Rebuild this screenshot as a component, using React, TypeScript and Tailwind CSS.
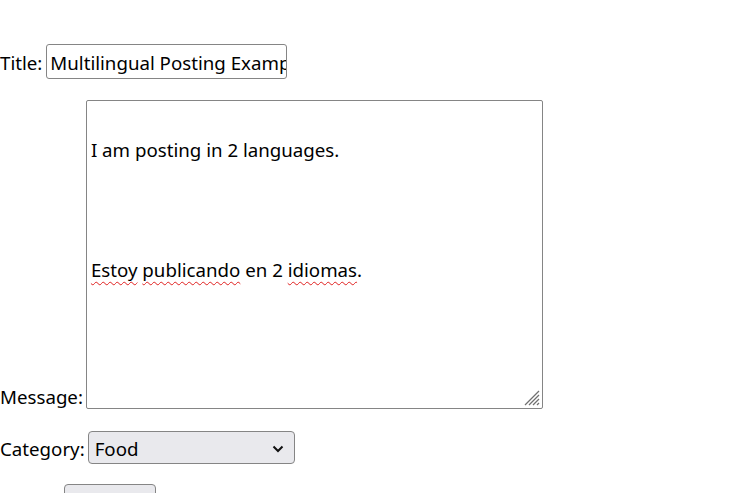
import React from "react";

const font = { fontFamily: '"Noto Sans", "Open Sans", sans-serif' };

function Squiggle({ children }: { children: React.ReactNode }) {
  return (
    <span className="underline decoration-wavy decoration-[#e0201f] decoration-1 underline-offset-[4px]">
      {children}
    </span>
  );
}

export default function App() {
  return (
    <div className="bg-white w-[756px] h-[493px] overflow-hidden text-black text-[18.7px] leading-[30px]" style={font}>
      <div className="pt-[44px]">
        <div className="flex items-center h-[35px]">
          <span className="mt-[2px]">Title:</span>
          <div className="ml-[4px] w-[241px] h-[35px] border border-[#858585] rounded-[3px] pl-[3px] pr-[3px] pt-[2px] overflow-hidden whitespace-nowrap flex items-center">
            <span>Multilingual Posting Example</span>
          </div>
        </div>

        <div className="flex items-end mt-[21px]">
          <span className="mb-[-3px]">Message:</span>
          <div className="relative ml-[3px] w-[457px] h-[309px] border border-[#858585] rounded-[2px] pl-[4px] pt-[4px]">
            <div>&nbsp;</div>
            <div>I am posting in 2 languages.</div>
            <div>&nbsp;</div>
            <div>&nbsp;</div>
            <div>&nbsp;</div>
            <div>
              <Squiggle>Estoy</Squiggle> <Squiggle>publicando</Squiggle> en 2 <Squiggle>idiomas</Squiggle>.
            </div>
            <svg className="absolute right-[2px] bottom-[2px]" width="18" height="18" viewBox="0 0 18 18">
              <line x1="17" y1="3" x2="3" y2="17" stroke="#707070" strokeWidth="1.3" />
              <line x1="17" y1="7" x2="7" y2="17" stroke="#707070" strokeWidth="1.3" />
              <line x1="17" y1="11" x2="11" y2="17" stroke="#707070" strokeWidth="1.3" />
              <line x1="17" y1="15" x2="15" y2="17" stroke="#707070" strokeWidth="1.3" />
            </svg>
          </div>
        </div>

        <div className="flex items-center mt-[22px]">
          <span className="mt-[2px]">Category:</span>
          <div className="ml-[3px] w-[207px] h-[33px] bg-[#e9e9ed] border border-[#858585] rounded-[4px] pl-[6px] pr-[10px] pt-[2px] flex items-center justify-between">
            <span>Food</span>
            <svg width="12" height="8" viewBox="0 0 12 8">
              <path d="M1.5 1.5 L6 6 L10.5 1.5" fill="none" stroke="#111" strokeWidth="2" />
            </svg>
          </div>
        </div>

        <div className="mt-[20px] ml-[64px] w-[92px] h-[33px] bg-[#e9e9ed] border border-[#858585] rounded-[4px]" />
      </div>
    </div>
  );
}
